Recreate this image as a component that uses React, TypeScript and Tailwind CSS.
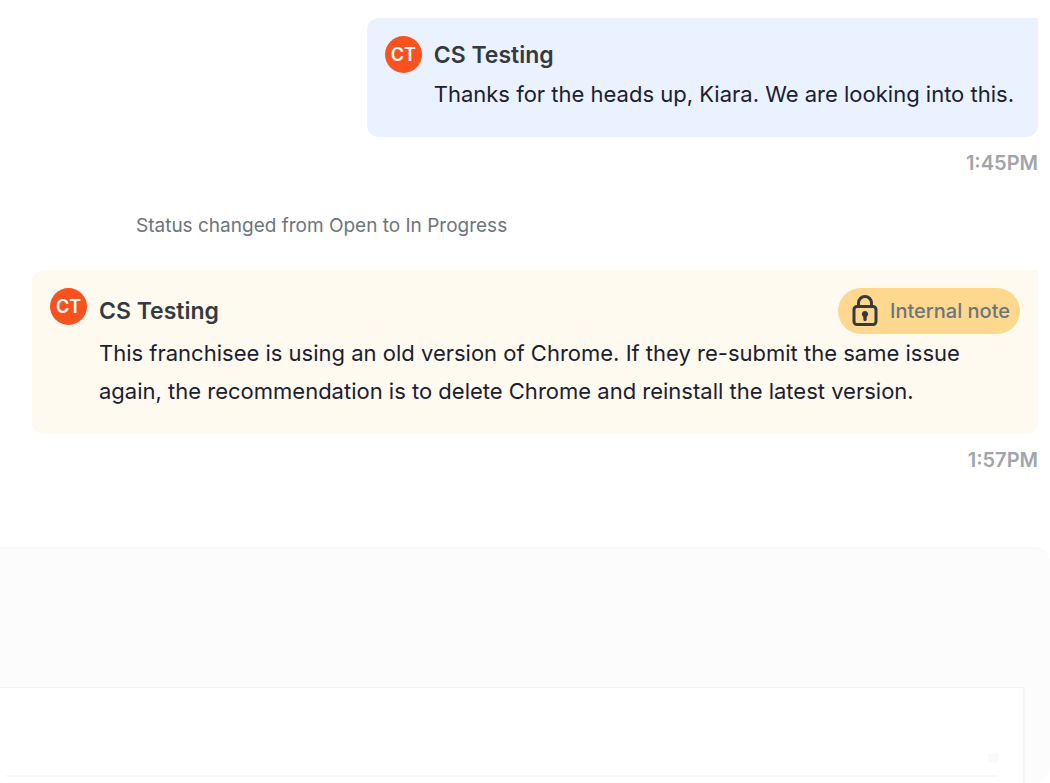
import clsx from "clsx";

interface MessageProps {
  author: string;
  initials: string;
  body: string;
  time: string;
  internal?: boolean;
}

function LockIcon() {
  return (
    <svg viewBox="0 0 26 32" className="h-8 w-[26px] text-[#343a40]" fill="none" aria-hidden="true">
      <path d="M6.5 11V8a6.5 6.5 0 0 1 13 0v3" stroke="currentColor" strokeWidth="3" />
      <rect x="2" y="11.5" width="22" height="18" rx="3" stroke="currentColor" strokeWidth="3" />
      <path
        d="M13 16a3.200 3.200 0 0 1 1.700 5.900V24.500a1.700 1.700 0 0 1-3.400 0V21.900A3.200 3.200 0 0 1 13 16Z"
        fill="currentColor"
      />
    </svg>
  );
}

function Avatar({ initials }: { initials: string }) {
  return (
    <div className="flex size-[37px] shrink-0 items-center justify-center rounded-full bg-[#f9521e] text-lg font-semibold text-white">
      {initials}
    </div>
  );
}

function Message({ author, initials, body, time, internal = false }: MessageProps) {
  return (
    <article className="flex flex-col items-end">
      <div
        className={clsx(
          "flex gap-3 rounded-xl rounded-tr-none px-[18px] pt-[18px] pb-6",
          internal ? "w-full bg-[#fffaef]" : "bg-[#ebf2ff]"
        )}
      >
        <Avatar initials={initials} />
        <div className="min-w-0 flex-1">
          <div className="flex items-center justify-between">
            <h2 className="text-[23px] leading-[39px] font-semibold text-[#343a40]">{author}</h2>
            {internal && (
              <span className="flex h-[46px] items-center gap-3 rounded-full bg-[#ffd88f] pr-2.5 pl-3.5 text-xl font-medium text-[#6c757d]">
                <LockIcon />
                Internal note
              </span>
            )}
          </div>
          <p className="pr-1.5 text-[22px] leading-[38px] text-[#1a2030]">{body}</p>
        </div>
      </div>
      <time className="mt-3 text-xl leading-7 font-semibold text-[#a1a5ab]">{time}</time>
    </article>
  );
}

function Composer() {
  return (
    <form className="flex flex-1 flex-col rounded-r-2xl border-t-2 border-[#f8f8f8] bg-[#fcfcfc] pt-[138px] pr-[25px]">
      <div className="flex-1 border-t border-r-2 border-[#f4f4f4] bg-white pr-[25px] pl-1.5">
        <div className="flex h-[89px] items-end border-b-2 border-[#f8f8f8] pb-3">
          <textarea aria-label="Reply" className="h-full flex-1 resize-none outline-none" />
          <button type="button" aria-label="Attach" className="size-2.5 bg-[#fafafa]" />
        </div>
      </div>
    </form>
  );
}

export default function App() {
  return (
    <main className="flex min-h-screen flex-col bg-white font-['Inter',sans-serif]">
      <section className="pt-[18px] pr-3 pb-[73px] pl-8">
        <Message
          author="CS Testing"
          initials="CT"
          body="Thanks for the heads up, Kiara. We are looking into this."
          time="1:45PM"
        />
        <p className="mt-[37px] mb-8 ml-[104px] text-[19px] leading-6 text-[#6c757d]">
          Status changed from Open to In Progress
        </p>
        <Message
          author="CS Testing"
          initials="CT"
          body="This franchisee is using an old version of Chrome. If they re-submit the same issue again, the recommendation is to delete Chrome and reinstall the latest version."
          time="1:57PM"
          internal
        />
      </section>
      <Composer />
    </main>
  );
}
